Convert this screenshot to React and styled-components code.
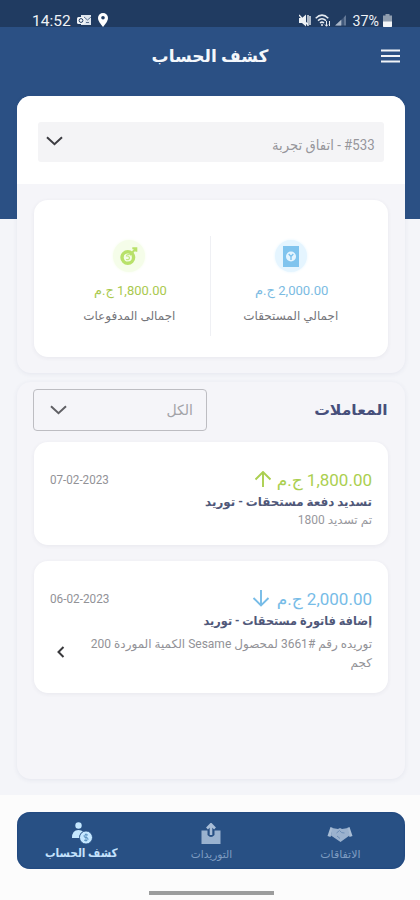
import React from "react";
import styled, { createGlobalStyle } from "styled-components";

const Global = createGlobalStyle`
  * { box-sizing: border-box; }
  body { margin: 0; background: #f4f5f9; }
`;

const Screen = styled.div`
  width: 420px;
  height: 900px;
  overflow: hidden;
  direction: rtl;
  display: flex;
  flex-direction: column;
  font-family: Roboto, "DejaVu Sans", sans-serif;
  background: linear-gradient(#2b5084 0 219px, #f4f5f9 219px);
`;

const StatusBar = styled.header`
  height: 27px;
  flex: none;
  direction: ltr;
  display: flex;
  justify-content: space-between;
  align-items: flex-end;
  padding: 0 28px 0 32px;
  background: #203b61;
  color: #eef2f6;
  font-size: 15.5px;
  line-height: 16px;
`;

const StatusGroup = styled.div`
  display: flex;
  align-items: center;
  gap: ${(p) => p.$gap}px;
  height: 14px;
  svg { display: block; flex: none; }
  span { padding-top: 2px; }
`;

const AppBar = styled.div`
  height: 69px;
  flex: none;
  display: grid;
  grid-template-columns: 20px 1fr 20px;
  align-items: start;
  padding: 16px 20px 0;
`;

const Title = styled.h1`
  margin: 0;
  text-align: center;
  color: #f4f7fb;
  font-size: 17px;
  line-height: 26px;
  font-weight: 700;
`;

const MenuButton = styled.button`
  border: 0;
  padding: 6px 0 0;
  background: none;
  display: block;
  svg { display: block; }
`;

const Panel = styled.section`
  flex: none;
  width: 388px;
  height: ${(p) => p.$height}px;
  margin: 0 15px ${(p) => p.$after}px 17px;
  border-radius: 14px;
  background: #f5f5f9;
  box-shadow: 0 1px 5px rgba(50, 70, 110, 0.08);
  overflow: hidden;
`;

const PickerArea = styled.div`
  height: 88px;
  padding: 26px 21px 0;
  background: #fff;
`;

const Picker = styled.div`
  height: 40px;
  display: flex;
  align-items: center;
  justify-content: space-between;
  padding: 5px 9px 0 8px;
  border-radius: 3px;
  background: #f4f4f6;
  color: #96969b;
  svg { margin-bottom: 7px; }
`;

const Card = styled.div`
  margin: 0 17px 16px;
  border-radius: 14px;
  background: #fff;
  box-shadow: 0 1px 4px rgba(50, 60, 90, 0.07);
`;

const Summary = styled(Card)`
  height: 157px;
  margin-top: 16px;
  padding: 36px 17px 0 15px;
  display: grid;
  grid-template-columns: 1fr 1px 1fr;
`;

const Divider = styled.i`
  height: 100px;
  background: #eff0f4;
`;

const Stat = styled.div`
  display: flex;
  flex-direction: column;
  align-items: center;
  padding-top: 4px;
`;

const StatIcon = styled.span`
  width: 32px;
  height: 32px;
  border-radius: 50%;
  background: ${(p) => p.$bg};
  box-shadow: 0 0 3px ${(p) => p.$bg};
  display: grid;
  place-items: center;
  margin-bottom: 8px;
`;

const Text = styled.span`
  display: block;
  white-space: nowrap;
  font-size: ${(p) => p.$size}px;
  line-height: ${(p) => p.$line || 20}px;
  font-weight: ${(p) => p.$weight || 400};
  color: ${(p) => p.$color || "inherit"};
  transform: scaleX(${(p) => p.$stretch || 1});
  transform-origin: ${(p) => p.$origin || "right"};
`;

const Toolbar = styled.div`
  display: flex;
  justify-content: space-between;
  align-items: center;
  padding: 7px 17px 11px 16px;
`;

const Filter = styled.div`
  width: 174px;
  height: 42px;
  display: flex;
  align-items: center;
  justify-content: space-between;
  padding: 0 13px 0 16px;
  border: 1px solid #bdbdc2;
  border-radius: 4px;
  color: #a3a3a8;
`;

const Transaction = styled(Card)`
  height: ${(p) => p.$height}px;
  padding: 25px 16px 0;
`;

const Row = styled.div`
  display: flex;
  justify-content: space-between;
  height: 25px;
  align-items: center;
`;

const Amount = styled.div`
  display: flex;
  align-items: center;
  gap: ${(p) => p.$gap}px;
  color: ${(p) => p.$color};
`;

const Details = styled.div`
  display: flex;
  justify-content: space-between;
  align-items: center;
  padding: ${(p) => p.$top}px 0 0 6px;
  svg { margin-bottom: 4px; }
`;

const Footer = styled.footer`
  flex: 1;
  background: #fcfcfc;
  padding: 17px 15px 0 17px;
  display: flex;
  flex-direction: column;
  align-items: center;
`;

const Nav = styled.nav`
  width: 388px;
  height: 57px;
  flex: none;
  border-radius: 13px;
  background: #285084;
  box-shadow: inset 0 0 2px #143c79;
  display: grid;
  grid-template-columns: repeat(3, 1fr);
`;

const Tab = styled.div`
  display: flex;
  flex-direction: column;
  align-items: center;
  padding-top: ${(p) => (p.$active ? 10 : 11)}px;
  color: ${(p) => (p.$active ? "#c4e2fc" : "#7e9cc1")};
  svg { flex: none; }
`;

const HomeBar = styled.i`
  width: 125px;
  height: 4px;
  margin: 22px 0 0 1px;
  background: #9c9d9d;
`;

const Chevron = ({ color = "#3d3d42" }) => (
  <svg width="17" height="10" viewBox="0 0 17 10" fill="none">
    <path d="M1 1.2l7.5 7 7.5-7" stroke={color} strokeWidth="2" />
  </svg>
);

const Arrow = ({ down }) => (
  <svg width="18" height="18" viewBox="0 0 18 18" fill="none" stroke="currentColor" strokeWidth="1.9">
    {down ? <path d="M9 0v15.500M1.500 8L9 15.500 16.500 8" /> : <path d="M9 16V1M1.500 8.500L9 1l7.500 7.500" />}
  </svg>
);

const StatusIcons = () => (
  <>
    <svg width="12" height="13" viewBox="0 0 12 13" fill="#eef2f6">
      <path d="M0 4h3l4-3.500v12L3 9H0z" />
      <path d="M9 1v11M11 2v9M0 1l9 10" stroke="#eef2f6" strokeWidth="1.400" />
    </svg>
    <svg width="16" height="13" viewBox="0 0 16 13" fill="none" stroke="#e4eaf1" strokeWidth="1.500">
      <path d="M0.700 4.200Q7-2 13.300 4.200M3 6.600Q7 3 11 6.600M5 9q2-1.800 4 0" />
      <circle cx="7" cy="11" r="1" fill="#e4eaf1" stroke="none" />
      <path d="M11.500 7v5M10 10.500l1.500 1.800L13 10.500M14.500 12V7" strokeWidth="1" />
    </svg>
    <svg width="12" height="12" viewBox="0 0 12 12">
      <path d="M1 11.500L11 1v10.500z" fill="#637896" />
      <path d="M0 11.500L6 6v5.500z" fill="#a9b6c7" />
      <path d="M8 0v12" stroke="#203b61" />
    </svg>
  </>
);

const Battery = () => (
  <svg width="9" height="13" viewBox="0 0 9 13">
    <path d="M2.500 0h4v1.500H9V13H0V1.500h2.500z" fill="#8f9daf" />
    <path d="M0 7.500h9V12q0 1-1 1H1q-1 0-1-1z" fill="#f4f6f8" />
  </svg>
);

const Mail = () => (
  <svg width="15" height="13" viewBox="0 0 15 13">
    <path d="M4 1h10v10H4z" fill="#dfe6ee" />
    <rect y="3" width="8" height="7" rx="1.500" fill="#f2f5f8" />
    <circle cx="4" cy="6.500" r="1.900" fill="none" stroke="#203b61" />
    <path d="M7 3l3.500 3L14 3M9 8.500h3" stroke="#5c7290" fill="none" />
  </svg>
);

const Pin = () => (
  <svg width="10" height="14" viewBox="0 0 10 14">
    <path d="M5 0a5 5 0 0 1 5 5C10 8.500 5 14 5 14S0 8.500 0 5a5 5 0 0 1 5-5z" fill="#fff" />
    <circle cx="5" cy="4.800" r="1.800" fill="#203b61" />
  </svg>
);

const Invoice = () => (
  <svg width="16" height="21" viewBox="0 0 16 21">
    <rect width="16" height="21" fill="#80c4ee" />
    <circle cx="8" cy="10.500" r="5" fill="#e5f5ff" />
    <path d="M5.700 8L8 10.500V14M10.300 8L8 10.500" stroke="#80c4ee" strokeWidth="1.400" fill="none" />
  </svg>
);

const Payment = () => (
  <svg width="18" height="20" viewBox="0 0 18 20" fill="none">
    <circle cx="7.800" cy="11.500" r="5.800" stroke="#b8e16a" strokeWidth="3.400" />
    <path d="M6 13.500q3.500.5 3.500-1.500T6.500 10q0-1.800 3-1.300" stroke="#c4e884" strokeWidth="1.200" />
    <path d="M10 9l5.500-6M12.300 2.300h4v3.500" stroke="#b8e16a" strokeWidth="2" />
  </svg>
);

const Handshake = () => (
  <svg width="26" height="21" viewBox="0 0 26 21">
    <path d="M3.500 4L0.500 13l3 1L6 5zM22.500 4l3 9-3 1L20 5z" fill="#a9bdd5" />
    <path d="M5 5l6 1 2-1 2 1 6-1 1.500 7.500L13.500 19 4 12.500z" fill="#9bb2ce" />
    <path d="M9.500 10l3-2.500q2 3 5 2.500M10 13l3 2.500" stroke="#6d8eb6" fill="none" />
  </svg>
);

const Upload = () => (
  <svg width="20" height="22" viewBox="0 0 20 22">
    <path d="M0.500 7.500H6.500v4.500q3.500 4 7 0V7.500h6V21h-19z" fill="#9ab2cf" />
    <path d="M10 12V3M6 5.500L10 1.300l4 4.200" stroke="#a8bdd7" strokeWidth="2.600" fill="none" />
  </svg>
);

const Account = () => (
  <svg width="22" height="22" viewBox="0 0 22 22">
    <circle cx="7.500" cy="3.500" r="3.200" fill="#c4e7ff" />
    <path d="M1 16q0-8 6.500-8 3 0 4.500 1.500Q8 12 8.500 16z" fill="#c4e7ff" />
    <circle cx="15" cy="15.500" r="6.500" fill="#c4e7ff" stroke="#285084" strokeWidth="0.800" />
    <path d="M17 13q-4-1.200-4 .8t2 1.700 2 1.800-4 .9M15 11.500v8" stroke="#5b91bf" fill="none" />
  </svg>
);

export default function App() {
  return (
    <Screen>
      <Global />
      <StatusBar>
        <StatusGroup $gap={6}>
          <span>14:52</span>
          <Mail />
          <Pin />
        </StatusGroup>
        <StatusGroup $gap={4}>
          <StatusIcons />
          <Text $size={15} $line={16} $stretch={0.95}>37%</Text>
          <Battery />
        </StatusGroup>
      </StatusBar>
      <AppBar>
        <MenuButton aria-label="القائمة">
          <svg width="19" height="14" viewBox="0 0 19 14">
            <path d="M0 1.500h19M0 7h19M0 12.500h19" stroke="#f1f4f8" strokeWidth="2.200" />
          </svg>
        </MenuButton>
        <Title>كشف الحساب</Title>
      </AppBar>

      <Panel $height={277} $after={9}>
        <PickerArea>
          <Picker>
            <Text $size={14} $stretch={0.945}>#533 - اتفاق تجربة</Text>
            <Chevron />
          </Picker>
        </PickerArea>
        <Summary>
          <Stat>
            <StatIcon $bg="#e5f5ff"><Invoice /></StatIcon>
            <Text $size={13.5} $color="#7bbbe2" $origin="85% 50%" $stretch={0.97}>2,000.00 ج.م</Text>
            <Text $size={12} $line={32} $color="#75757a" $origin="center">اجمالي المستحقات</Text>
          </Stat>
          <Divider />
          <Stat>
            <StatIcon $bg="#f5fde9"><Payment /></StatIcon>
            <Text $size={13.5} $color="#a9c94e" $origin="right" $stretch={0.96}>1,800.00 ج.م</Text>
            <Text $size={12} $line={32} $color="#75757a" $origin="center">اجمالى المدفوعات</Text>
          </Stat>
        </Summary>
      </Panel>

      <Panel $height={397} $after={16}>
        <Toolbar>
          <Text $size={15} $line={22} $weight={700} $color="#474f7b" $stretch={1.04}>المعاملات</Text>
          <Filter>
            <Text $size={14}>الكل</Text>
            <Chevron color="#606065" />
          </Filter>
        </Toolbar>
        <Transaction $height={103}>
          <Row>
            <Amount $color="#abcf50" $gap={5}>
              <Text $size={17}>1,800.00 ج.م</Text>
              <Arrow />
            </Amount>
            <Text $size={12} $color="#929297" $origin="left" $stretch={0.97}>07-02-2023</Text>
          </Row>
          <Text $size={12} $weight={700} $color="#505879" $stretch={0.99}>تسديد دفعة مستحقات - توريد</Text>
          <Text $size={12} $line={16} $color="#98989d">تم تسديد 1800</Text>
        </Transaction>
        <Transaction $height={132}>
          <Row>
            <Amount $color="#77bce7" $gap={7}>
              <Text $size={17}>2,000.00 ج.م</Text>
              <Arrow down />
            </Amount>
            <Text $size={12} $color="#929297" $origin="left" $stretch={0.98}>06-02-2023</Text>
          </Row>
          <Text $size={12} $weight={700} $color="#505879" $stretch={0.94}>إضافة فاتورة مستحقات - توريد</Text>
          <Details $top={4}>
            <div>
              <Text $size={12} $line={19} $color="#929297">توريده رقم #3661 لمحصول Sesame الكمية الموردة 200</Text>
              <Text $size={12} $line={19} $color="#929297">كجم</Text>
            </div>
            <svg width="9" height="12" viewBox="0 0 9 12" fill="none">
              <path d="M7.500 1L2.500 6l5 5" stroke="#39393c" strokeWidth="2" />
            </svg>
          </Details>
        </Transaction>
      </Panel>

      <Footer>
        <Nav>
          <Tab>
            <Handshake />
            <Text $size={11} $line={21} $origin="center">الاتفاقات</Text>
          </Tab>
          <Tab>
            <Upload />
            <Text $size={11} $origin="center" $stretch={0.96}>التوريدات</Text>
          </Tab>
          <Tab $active>
            <Account />
            <Text $size={12} $line={19} $weight={700} $origin="center" $stretch={0.88}>كشف الحساب</Text>
          </Tab>
        </Nav>
        <HomeBar />
      </Footer>
    </Screen>
  );
}
